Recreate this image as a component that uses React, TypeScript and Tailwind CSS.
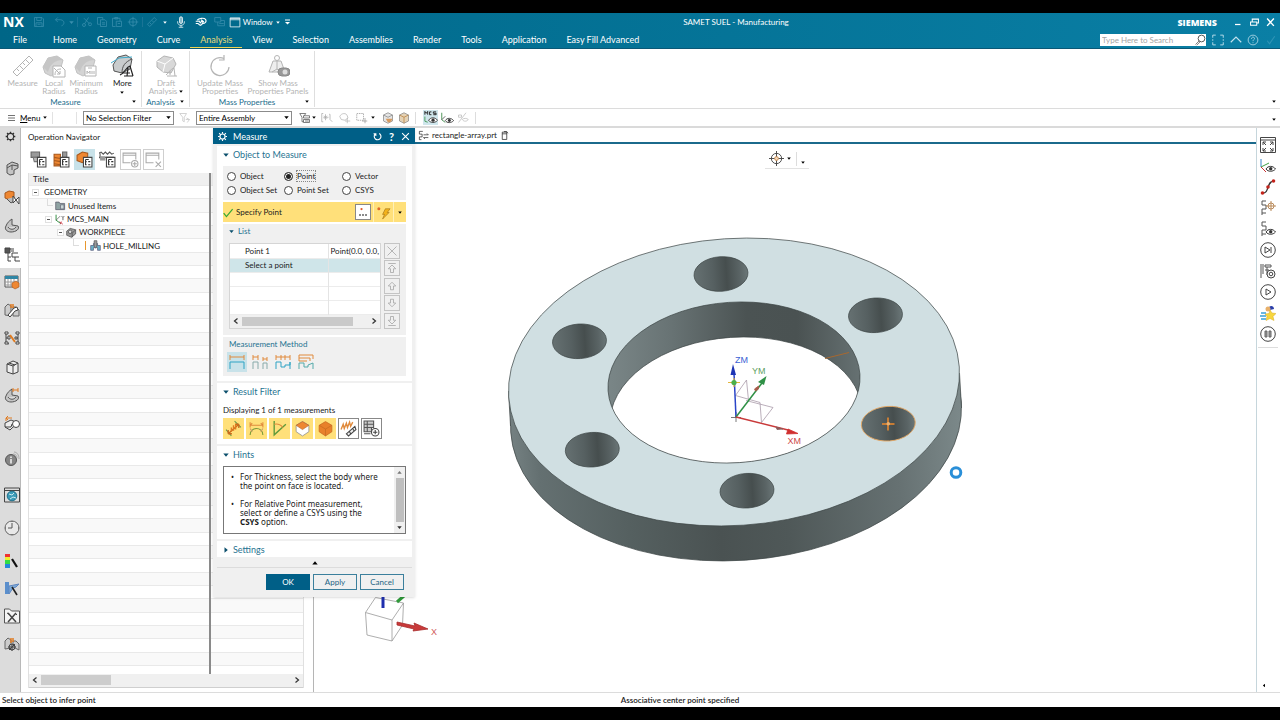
import type { ReactNode } from 'react';
import { clsx } from 'clsx';

interface IconProps {
  children: ReactNode;
  className?: string;
  box?: string;
}

function Icon({ children, className = 'w-4 h-4', box = '0 0 16 16' }: IconProps) {
  return (
    <svg viewBox={box} className={clsx('shrink-0', className)} fill="none" stroke="currentColor" strokeWidth="1" aria-hidden="true">
      {children}
    </svg>
  );
}

function Caret({ className = 'w-[5px] h-[3px] text-black' }: { className?: string }) {
  return (
    <svg viewBox="0 0 10 6" className={clsx('shrink-0', className)} fill="currentColor" aria-hidden="true">
      <path d="M0.5 0.5h9L5 6z" />
    </svg>
  );
}

/* Title bar */

function QuickAccess() {
  return (
    <div className="flex items-center text-[#3a8fae]">
      <button aria-label="Save" className="ml-[9px]">
        <Icon className="w-3 h-3"><path d="M2 2h10l2 2v10H2zM5 2v4h6V2M4 14V9h8v5M6 11h4" /></Icon>
      </button>
      <button aria-label="Undo" className="ml-[9px] flex items-center">
        <Icon className="w-3 h-3"><path d="M5 2L2 5l3 3M2 5h7c6 1 5 7 1 8" /></Icon>
        <Caret className="ml-[3px] w-[5px] h-[3px]" />
      </button>
      <span className="mx-[3px] h-2.5 w-px bg-[#1a7496]" />
      <button aria-label="Cut"><Icon className="w-3 h-3"><path d="M10 2L5 10M4 3l7 7" /><circle cx="4" cy="12" r="2" /><circle cx="12" cy="11" r="2" /></Icon></button>
      <button aria-label="Copy" className="ml-[3px]"><Icon className="w-3 h-3"><path d="M6 11H2V2h7v3M6 5h6l2 2v7H6zM8 9h4M8 11h4" /></Icon></button>
      <button aria-label="Paste" className="ml-[3px]"><Icon className="w-3 h-3"><path d="M6 14H2V3h10v4M5 2h4v2H5zM7 7h7v7H7zM9 10h3" /></Icon></button>
      <button aria-label="Repeat" className="ml-1"><Icon className="w-3 h-3"><circle cx="8" cy="8" r="5" /><path d="M8 1v14M1 8h14" /></Icon></button>
      <span className="mx-[3px] h-2.5 w-px bg-[#1a7496]" />
      <button aria-label="Measure" className="flex items-center">
        <Icon className="w-3 h-3"><path d="M2 11L11 2l3 3-9 9zM5 9l2 2M8 6l2 2" /></Icon>
        <Caret className="ml-[5px] w-[4px] h-[3px] text-white" />
      </button>
      <button aria-label="Voice" className="ml-2 text-white">
        <Icon className="w-3 h-3"><rect x="6" y="1" width="4" height="9" rx="2" fill="#ffffff88" /><path d="M3.500 7v1c0 6 9 6 9 0V7M8 12.500V15M5 15h6" /></Icon>
      </button>
      <button aria-label="Touch" className="ml-2 text-white">
        <Icon className="w-3 h-3"><path d="M3 5.500C5 3 12 2 14 4.500c2 3-1 6-4 5.500M1 7h4M1 10h3l3 2.500 2-1 2-4-2-.5-2 2-2-3M8 5l4 3" strokeWidth="1.500" /></Icon>
      </button>
      <button aria-label="Switch" className="ml-[7px]"><Icon className="w-3 h-3"><path d="M1 2h8v6H1zM5 8v5h9V6H9M7 10h6" /></Icon></button>
      <button className="ml-[3px] flex items-center text-[8px] text-white">
        <Icon className="mr-[2px] w-3 h-3"><path d="M1.500 2.500h13v12h-13zM1.500 5h13M1.500 3.500h13" /></Icon>
        Window
        <Caret className="ml-[3px] w-[4px] h-[3px]" />
      </button>
      <button aria-label="Customize" className="ml-[5px] text-white">
        <Icon className="w-[5px] h-[6px]" box="0 0 10 12"><path d="M0 2h10" strokeWidth="2" /><path d="M0 6h10l-5 5z" fill="currentColor" stroke="none" /></Icon>
      </button>
    </div>
  );
}

function TitleBar() {
  return (
    <div className="grid h-[18px] grid-cols-[1fr_auto_1fr] items-center">
      <div className="flex items-center pl-[3px]">
        <span className="font-['Open_Sans',sans-serif] text-[14px] leading-none font-bold">NX</span>
        <QuickAccess />
      </div>
      <div className="pl-48 text-[8px] whitespace-nowrap">SAMET SUEL - Manufacturing</div>
      <div className="flex items-center justify-end pr-[5px]">
        <span className="mr-[17px] font-['Open_Sans',sans-serif] text-[9px] font-extrabold">SIEMENS</span>
        <button aria-label="Minimize" className="mr-2"><Icon className="w-2 h-2"><path d="M2 13h11" strokeWidth="2.500" /></Icon></button>
        <button aria-label="Restore" className="mr-[7px]"><Icon className="w-[9px] h-[9px]"><path d="M4 6V2h11v7h-3M1 7h11v6H1z" strokeWidth="1.800" /></Icon></button>
        <button aria-label="Close"><Icon className="w-[9px] h-[9px]"><path d="M2 1l12 13M14 1L2 14" strokeWidth="2.500" /></Icon></button>
      </div>
    </div>
  );
}

const TABS = ['Home', 'Geometry', 'Curve', 'Analysis', 'View', 'Selection', 'Assemblies', 'Render', 'Tools', 'Application', 'Easy Fill Advanced'];

function TabBar() {
  return (
    <div className="flex h-[18px] items-stretch border-b border-[#0a5876] text-[9px]">
      <button className="mr-[5px] pr-[11px] pl-[13px]">File</button>
      {TABS.map(tab => (
        <button
          key={tab}
          className={clsx('border-y px-[10px] whitespace-nowrap', tab === 'Analysis' ? 'border-t-transparent border-b-[#f0d552] text-[#e8dc7a]' : 'border-transparent')}
        >
          {tab}
        </button>
      ))}
      <div className="ml-auto flex items-center gap-1.5 pr-[3px] text-[#c3e2ee]">
        <label className="flex h-3 w-[106px] items-center bg-white text-[#555]">
          <input aria-label="Search" placeholder="Type Here to Search" className="min-w-0 flex-1 pl-0.5 text-[8px] outline-none placeholder:text-[#a5a5a5]" />
          <Icon className="w-3 h-3"><circle cx="10" cy="6" r="4.500" strokeWidth="1.300" /><path d="M7 9l-5 5M8.500 10l-5 5" /></Icon>
        </label>
        <button aria-label="Full screen"><Icon className="w-3 h-3"><path d="M1 5V1.500h4M11 1.500h4V5M15 11v3.500h-4M5 14.500H1V11M1 7v2M15 7v2" strokeWidth="1.200" /></Icon></button>
        <button aria-label="Minimize ribbon"><Icon className="w-3 h-3"><path d="M1 11l7-7 7 7" strokeWidth="1.500" /></Icon></button>
        <button aria-label="Help" className="-ml-px"><Icon className="w-3 h-3"><circle cx="8" cy="8" r="6.500" /><path d="M6 6.500c0-3 4-3 4-.5 0 1.500-2 1.500-2 3.500M8 11v1.200" /></Icon></button>
        <button aria-label="Done" className="text-[#2f93b5]"><Icon className="w-3 h-3"><path d="M3 9l3 4 7-10" strokeWidth="1.500" /></Icon></button>
      </div>
    </div>
  );
}

/* Ribbon */

const solidShape = <><path d="M1 13L6 4l9-2 6 4-3 11-9 5-6-3z" fill="#d4d4d4" stroke="#c2c2c2" /><path d="M1 13L6 4l9-2 6 4c-8 0-13 4-15 12z" fill="#c6c6c6" stroke="none" /></>;

function RibbonButton({ label, icon, width, active, caret }: { label: string[]; icon: ReactNode; width: string; active?: boolean; caret?: boolean }) {
  return (
    <button className={clsx('flex flex-col items-center pt-[3px] text-[8px] leading-[8px]', width, active ? 'text-[#222]' : 'text-[#b4b4b4]')}>
      <Icon className="mb-px w-6 h-6" box="0 0 24 24">{icon}</Icon>
      {label.map((line, i) => (
        <span key={line} className="flex items-center whitespace-nowrap">
          {line}
          {caret && i === label.length - 1 && <Caret className="ml-0.5 w-[4px] h-[3px] text-black" />}
        </span>
      ))}
      {active && <Caret className="mt-1 w-[4px] h-[3px] text-black" />}
    </button>
  );
}

function RibbonGroup({ title, children, width, inset }: { title: string; children: ReactNode; width: string; inset: string }) {
  return (
    <section className={clsx('relative mt-0.5 mb-px flex shrink-0 flex-col border-r border-[#dedede]', width)}>
      <div className={clsx('flex flex-1 items-start', inset)}>{children}</div>
      <div className="pr-[10px] text-center text-[8px] leading-[10px] text-[#236d8c]">{title}</div>
      <Caret className="absolute right-[5px] bottom-1 w-[4px] h-[3px] text-black" />
    </section>
  );
}

function Ribbon() {
  return (
    <div className="flex h-[60px] items-stretch border-b border-[#dcdcdc] bg-white">
      <RibbonGroup title="Measure" width="w-[142px]" inset="pl-[6px]">
        <RibbonButton width="w-[34px]" label={['Measure']} icon={<path d="M2 18L18 2l4 4L6 22zM6 15l2 2M9 12l3 3M12 9l2 2M15 6l3 3" />} />
        <RibbonButton width="w-[30px]" label={['Local', 'Radius']} icon={<>{solidShape}<path d="M11 12h8l4 4v7H11z" fill="#fff" /><path d="M13 21c0-4 2-6 6-6M12 14l6 6M18 17v3h-3" /></>} />
        <RibbonButton width="w-[36px]" label={['Minimum', 'Radius']} icon={<>{solidShape}<path d="M11 12h11v10H11z" fill="#fff" /><path d="M13 20v-3l1.500 2 1.500-2v3M18 17v3M20 20v-3M14 14h4" /></>} />
        <RibbonButton width="w-[38px]" active label={['More']} icon={<><path d="M3 11L8 3l8-2 6 4-2 10-8 4-8-2z" fill="#c9cccd" stroke="#555" /><path d="M12 19c0-7 3-11 10-14" stroke="#555" /><path d="M1 9l8-5 13-1" stroke="#3fa9c9" /><path d="M10 21c5-2 6-8 10-9l3 10M12 19h8M14 22h9M18 14l-1 8" stroke="#222" strokeWidth="1.200" /></>} />
      </RibbonGroup>
      <RibbonGroup title="Analysis" width="w-12" inset="pl-[5px]">
        <RibbonButton width="w-[38px]" caret label={['Draft', 'Analysis']} icon={<><path d="M3 7l7-5 9 2 3 6-5 9-8-1-6-5z" fill="#d8d8d8" /><path d="M3 7l8 3 8-6M11 10l-2 8" stroke="#fff" /><path d="M12 21c3-2 4-6 8-7l1 8M13 22h10M16 17v4" /></>} />
      </RibbonGroup>
      <RibbonGroup title="Mass Properties" width="w-[125px]" inset="pl-1">
        <RibbonButton width="w-[52px]" label={['Update Mass', 'Properties']} icon={<path d="M16 4.500A9 9 0 1 0 21 13M16 1v5h-5" strokeWidth="1.200" />} />
        <RibbonButton width="w-[64px]" label={['Show Mass', 'Properties Panels']} icon={<><path d="M7 7h8l4 11H3z" fill="#eee" /><circle cx="11" cy="4" r="2.500" /><path d="M11 7v8l-5 3M11 15l4 3" /><rect x="12" y="14" width="12" height="8" rx="4" fill="#999" stroke="#888" /><circle cx="19" cy="18" r="2.500" fill="#ddd" stroke="none" /></>} />
      </RibbonGroup>
      <Caret className="mt-auto mr-1 mb-[5px] ml-auto w-[4px] h-[3px] text-black" />
    </div>
  );
}

function FilterSelect({ label, value, width }: { label: string; value: string; width: string }) {
  return (
    <div className={clsx('relative h-[14px]', width)}>
      <select aria-label={label} className="block h-full w-full appearance-none border border-[#8b8b8b] bg-white pl-0.5 text-[8px] leading-none text-black">
        <option>{value}</option>
      </select>
      <Caret className="pointer-events-none absolute top-[5px] right-[3px] w-[5px] h-[3px] text-black" />
    </div>
  );
}

const eye = <><path d="M6 11c2-3.500 7-3.500 9.500 0-2.500 3-7.500 3-9.500 0z" fill="#fff" stroke="#333" /><circle cx="10.700" cy="10.800" r="1.700" fill="#333" stroke="none" /></>;

function SelectionBar() {
  return (
    <div className="flex h-[19px] items-center border-b-2 border-[#dadada] bg-white text-[8px] text-[#777]">
      <button className="flex w-[52px] items-center pl-2 text-black">
        <Icon className="mr-1 w-2 h-2 text-[#444]"><path d="M0 3h14M0 8h14M0 13h14" strokeWidth="1.500" /></Icon>
        <span><u>M</u>enu</span>
        <Caret className="ml-[3px] w-[4px] h-[3px]" />
      </button>
      <span className="mr-[6px] h-3 w-[25px] border-x border-[#e2e2e2]" />
      <FilterSelect label="Type filter" value="No Selection Filter" width="w-[91px]" />
      <Icon className="mx-[5px] w-3 h-3 text-[#c4c4c4]"><path d="M1 2h9L7 7v6l-2-1V7zM10 8l4 2-3 4M14 10H9" /></Icon>
      <FilterSelect label="Selection scope" value="Entire Assembly" width="w-[96px]" />
      <div className="flex items-center pl-[7px]">
        <Icon className="w-3 h-3 text-[#555]"><path d="M1 2h8M1 2l3 5v6h2M9 2L7 5M6 5h8v3H6zM6 10h8v4H6zM8 12h5" /></Icon>
        <Caret className="ml-px w-[4px] h-[3px] text-black" />
        <Icon className="ml-[5px] w-3 h-3 text-[#aaa]"><path d="M3 2H1v11h2M6 3v8M3 7h7M4 5l4 4M8 5L4 9M11 3h1v7l3 3" /></Icon>
        <Icon className="ml-1.5 w-3 h-3 text-[#b5b5b5]"><path d="M1 6c2-5 9-5 10-1l1 3-4 3-5-1zM11 8v7M8 12h7" /></Icon>
        <Icon className="ml-[5px] w-3 h-3 text-[#999]"><path d="M1 2h9v9H1z" strokeDasharray="2 1" /><path d="M12 8v7M8 12h7" /></Icon>
        <Caret className="ml-[3px] w-[4px] h-[3px] text-black" />
        <Icon className="ml-[7px] w-3 h-3 text-[#888]"><path d="M2 4l6-3 6 3v8l-6 3-6-3z" fill="#e4e4e4" /><path d="M2 4l6 3 6-3" /><path d="M5 9h9l-2 4-4 1z" fill="#d69a5f" stroke="none" /></Icon>
        <Icon className="ml-1 w-3 h-3 text-[#888]"><path d="M2 4l6-3 6 3v8l-6 3-6-3z" fill="#e4d2b5" /><path d="M2 4l6 3 6-3M8 7v8" stroke="#b9803f" /></Icon>
        <span className="mx-[5px] h-3 w-px bg-[#ddd]" />
        <button aria-label="Show MCS" className="ml-[2px] h-[15px] w-[15px] bg-[#cfe6ec]">
          <Icon className="w-[15px] h-[15px]"><path d="M2 5V1.500l1.500 2 1.500-2V5M9 2H7v3h2M14 2h-3v1.500h3V5h-3" stroke="#222" /><path d="M2 7v5l3 1" stroke="#4a9a5a" />{eye}</Icon>
        </button>
        <Icon className="ml-[2px] w-[14px] h-[14px]"><path d="M2 2v8l4 3" stroke="#3b8a48" /><path d="M2 10l4-4" stroke="#555" />{eye}</Icon>
        <Icon className="ml-[3px] w-3 h-3 text-[#bbb]"><path d="M2 14L12 1M2 4h4v3H2zM7 10c2-2 6-2 8 0-2 3-6 3-8 0z" /></Icon>
        <span className="ml-[6px] h-3 w-px bg-[#ddd]" />
      </div>
      <Caret className="mt-1 mr-1 ml-auto w-[4px] h-[3px] text-black" />
    </div>
  );
}

/* Left resource bar */

const greyBlock = <path d="M3 5l5-3 6 2v4l-4 2v4l-4 1-3-2z" fill="#c4c4c4" stroke="#555" />;
const disc = <path d="M8 2v6l6 1c2 3-2 6-7 6-4 0-7-3-5-6 1-3 3-5 6-7zM4 10c2 3 6 3 8 0" fill="#c4c4c4" stroke="#555" />;
const tools = <><path d="M1 13V5l3-3 3 2v10zM9 14V5h3l3 3v6z" fill="#ccc" stroke="#666" /><path d="M7 2v4M9 2v4" stroke="#e07b20" strokeWidth="1.500" /><path d="M4 13l6-7 3-1 1 3-3 1-5 6z" fill="#fff" stroke="#444" /></>;

const RESOURCES: { name: string; size: string; icon: ReactNode }[] = [
  { name: 'Assembly Navigator', size: 'h-7', icon: <>{greyBlock}<path d="M3 8l5-3 6 1M8 5v5" stroke="#555" /></> },
  { name: 'Constraint Navigator', size: 'h-[29px]', icon: <><path d="M1 4l4-2 5 1v6l-4 2-5-2z" fill="#ee8732" stroke="#a8581c" /><path d="M3 10l4 4 3-2V8" fill="#bbb" stroke="#555" /><path d="M9 7v7l6-6v7z" fill="#fff" stroke="#444" /></> },
  { name: 'Part Navigator', size: 'h-7', icon: disc },
  { name: 'Operation Navigator', size: 'h-[29px]', icon: <><path d="M1 2h5v5H1z" fill="#555" stroke="#444" /><path d="M6 3h4M7 5h3M4 7v8h3M4 11h3M10 7h-2v4h3v4h5M10 7h4M11 11h4" stroke="#444" /></> },
  { name: 'Machine Tool Navigator', size: 'h-7', icon: <><path d="M1 2h13v11H1z" fill="#fff" stroke="#555" /><path d="M1 2h13v3H1z" fill="#2f86a5" stroke="none" /><path d="M1 8h13M1 11h13M4 5v8M7 5v8M10 5v8" stroke="#999" /><path d="M8 9l4-2 3 2v4l-4 2-3-2z" fill="#ee8732" stroke="#a8581c" strokeWidth=".6" /></> },
  { name: 'Reuse Library', size: 'h-7', icon: tools },
  { name: 'Web Links', size: 'h-7', icon: <><path d="M2 3v10l3 1M2 8h3M14 3v11M11 8h3" stroke="#444" /><path d="M1 2h3v2H1zM4 6h2v3H4zM1 12h3v2H1zM12 2h3v2h-3zM11 7h2v2h-2zM12 12h3v2h-3z" fill="#fff" stroke="#444" /><path d="M6 5l5 7" stroke="#e07b20" strokeWidth="2" /></> },
  { name: 'Books', size: 'h-[29px]', icon: <path d="M3 5l6-3 5 2v9l-5 2-6-2zM3 5l6 2 5-3M9 7v8M5 4l6 2" fill="#eee" stroke="#444" /> },
  { name: 'Measure Parts', size: 'h-7', icon: <>{disc}<path d="M9 3h5M9 1v4M14 1v4" stroke="#e07b20" /></> },
  { name: 'Inspect', size: 'h-7', icon: <><path d="M1 8l6-3 7 3-6 5-2 2-5-3z" fill="#eee" stroke="#444" /><path d="M1 12l6 0 1-3" stroke="#444" /><path d="M2 6V3h6M2 3l2-2M2 3l2 2" stroke="#e07b20" /><circle cx="12" cy="9" r="3.500" fill="#fff" stroke="#444" /></> },
  { name: 'Information', size: 'h-11', icon: <><circle cx="7" cy="9" r="5.500" fill="#858585" stroke="#555" /><path d="M7 5.500v1.500M7 8v4.500" stroke="#eee" strokeWidth="1.600" /><path d="M10 1c3 0 5 3 5 7M9 3c3 0 4 2 4 4" stroke="#aaa" /></> },
  { name: 'Browser', size: 'h-7', icon: <><path d="M.5 1h15v14H.5z" fill="#ddd" stroke="#444" /><path d="M.5 3.500h15" stroke="#444" /><circle cx="8" cy="9" r="4.800" fill="#3b9bb8" stroke="#1f6f8a" /><path d="M5 7l3 1 2-2M6 12l3-2 3 1" stroke="#c9e8ef" /></> },
  { name: 'History', size: 'h-[38px]', icon: <><circle cx="8" cy="8" r="7" fill="#e8e8e8" stroke="#666" /><path d="M8 3v5H4M8 1v1M8 14v1M1 8h1M14 8h1" stroke="#555" /></> },
  { name: 'Colors', size: 'h-[27px]', icon: <><path d="M1 1h5v3H1z" fill="#e33" stroke="none" /><path d="M1 4h5v3H1z" fill="#ee3" stroke="none" /><path d="M1 7h5v4H1z" fill="#3d4" stroke="none" /><path d="M1 11h5v4H1z" fill="#28d" stroke="none" /><path d="M8 6l5 8" stroke="#111" strokeWidth="2.200" /></> },
  { name: 'Display', size: 'h-7', icon: <><path d="M1 2h4v12H1z" fill="#5b8fcc" stroke="none" /><path d="M5 6l10-2-3 3-3 1-4 6z" fill="#7facd8" stroke="#5f86c0" /><path d="M8 7l5 8" stroke="#222" strokeWidth="1.600" /></> },
  { name: 'Process Studio', size: 'h-7', icon: <><path d="M.5 3V1h5l2 2h8v12H.5z" fill="#f4f4f4" stroke="#555" /><path d="M4 5l8 9M12 5l-8 9" stroke="#444" strokeWidth="1.500" /><path d="M3 5l2 1M11 5l2 2" stroke="#444" /></> },
  { name: 'Wizards', size: 'h-7', icon: <><path d="M1 13V5l3-3 3 2v8zM9 11V5h3l3 3v6z" fill="#ccc" stroke="#666" /><path d="M7 2v5M9 2v4" stroke="#e07b20" strokeWidth="1.500" /><circle cx="8" cy="11" r="3" fill="#bbb" stroke="#444" /><path d="M8 8v7M4 11h8M5 14l6-6" stroke="#444" /></> },
];

function ResourceBar() {
  return (
    <nav className="flex w-[21px] shrink-0 flex-col items-stretch border-r border-[#b9b9b9] bg-[#dcdcdc]">
      <button aria-label="Resource bar options" className="flex h-[26px] items-start justify-center pt-[3px]">
        <Icon className="w-[11px] h-[11px] text-[#333]"><circle cx="8" cy="8" r="4.500" strokeWidth="1.600" /><path d="M8 1v2M8 13v2M1 8h2M13 8h2M3 3l1.500 1.500M11.500 11.500L13 13M13 3l-1.500 1.500M4.500 11.500L3 13" strokeWidth="2" /></Icon>
      </button>
      {RESOURCES.map(res => (
        <button
          key={res.name}
          aria-label={res.name}
          className={clsx('flex items-center justify-center pl-[3px]', res.size, res.name === 'Operation Navigator' && '-mr-px bg-white')}
        >
          <Icon className="w-4 h-4">{res.icon}</Icon>
        </button>
      ))}
    </nav>
  );
}

/* Operation navigator */

const treeMark = <><path d="M7 6h8v9H7z" fill="#fff" stroke="#444" /><path d="M9 8v5h1M9 10h1M11.500 10h2M11.500 13h2M9 8h3" stroke="#333" /></>;

const NAV_TOOLS: { name: string; style: string; icon: ReactNode }[] = [
  { name: 'Program order view', style: '', icon: <><path d="M1 1h8v5H1z" fill="#9a9a9a" stroke="#666" /><path d="M3 6h5v4H4z" fill="#bbb" stroke="#777" />{treeMark}</> },
  { name: 'Machine tool view', style: '', icon: <><path d="M1 3h6v11H1z" fill="#ee8732" stroke="#a8581c" /><path d="M1 6l6 1M1 9l6 1M1 12l6 1" stroke="#a8581c" /><path d="M9 1h4v5H9z" fill="#999" stroke="#666" />{treeMark}</> },
  { name: 'Geometry view', style: 'bg-[#c8e2e9]', icon: <><path d="M1 4l5-3 5 1v5l-5 4-5-2z" fill="#ee8732" stroke="#a8581c" />{treeMark}</> },
  { name: 'Machining method view', style: '', icon: <><path d="M0 2l2-1 2 2 2-2 2 2 2-2 2 2 2-1M1 2v5M4 6h4M0 6h14" stroke="#555" /><path d="M1 5h5v4H1z" fill="#999" stroke="none" />{treeMark}</> },
  { name: 'Create', style: 'border border-[#cfcfcf]', icon: <><path d="M8 11H1V2h12v6M1 4h12" stroke="#aaa" /><circle cx="12" cy="12" r="3" stroke="#aaa" /><path d="M10 12h4M12 10v4" stroke="#aaa" /></> },
  { name: 'Delete', style: 'border border-[#cfcfcf]', icon: <><path d="M8 11H1V2h12v6M1 4h12M10 10l5 5M15 10l-5 5" stroke="#aaa" /></> },
];

const expander = <span className="flex h-[7px] w-[7px] items-center justify-center border border-[#e0e0e0] bg-white"><span className="h-px w-[3px] bg-[#555]" /></span>;
const branch = <span className="mb-[6px] h-[7px] w-[6px] border-b border-l border-[#ddd]" />;

const TREE: { name: string; indent: string; lead: ReactNode; icon?: ReactNode }[] = [
  { name: 'GEOMETRY', indent: 'pl-[3px] gap-[5px]', lead: expander },
  { name: 'Unused Items', indent: 'pl-[18px] gap-[2px]', lead: branch, icon: <><path d="M1 3h5l1 2h7v9H1z" fill="#8fa3a3" stroke="#556" /><path d="M8 7h5v6H8z" fill="#c9d6d6" stroke="#667" /></> },
  { name: 'MCS_MAIN', indent: 'pl-[16px] gap-[2px]', lead: expander, icon: <><path d="M3 1v8l7 5" stroke="#2f8d3e" strokeWidth="1.400" /><path d="M3 9l6-6" stroke="#555" /><path d="M8 11l5 4M11 11l-2 4" stroke="#c23" /><path d="M11 3l2 2 2-2M13 5v4" stroke="#333" /></> },
  { name: 'WORKPIECE', indent: 'pl-[28px] gap-[2px]', lead: expander, icon: <><path d="M1 6l5-4 8 2v6l-6 5-7-3z" fill="#999" stroke="#444" /><circle cx="6" cy="7" r="2.500" fill="#ddd" stroke="#444" /><path d="M9 15V9l5-5" stroke="#444" /></> },
];

function OperationNavigator() {
  return (
    <aside className="flex w-[293px] shrink-0 flex-col border-r border-[#b5b5b5] bg-white pt-1 pr-[9px] pb-1 pl-[7px] text-[8px] text-[#1a1a1a]">
      <h2 className="leading-[10px]">Operation Navigator</h2>
      <div className="mt-[7px] mb-[3px] flex items-center gap-[2px]">
        {NAV_TOOLS.map(tool => (
          <button key={tool.name} aria-label={tool.name} className={clsx('flex h-[21px] w-[21px] items-center justify-center', tool.style)}>
            <Icon className="w-[17px] h-[17px]">{tool.icon}</Icon>
          </button>
        ))}
      </div>
      <div className="flex min-h-0 flex-1 flex-col border-x border-[#e0e0e0]">
        <div className="flex min-h-0 flex-1">
          <div className="w-[182px] shrink-0 overflow-hidden border-r-2 border-[#8a8a8a]">
            <div className="h-3 bg-[#f0f0f0] pl-1 leading-3">Title</div>
            {Array.from({ length: 37 }, (_, i) => (
              <div key={i} className="flex h-[13px] items-center border-t border-[#e9e9e9] whitespace-nowrap nth-[3n]:h-[14px] odd:bg-[#f9f9f9]">
                {i < TREE.length && (
                  <div className={clsx('flex items-center', TREE[i].indent)}>
                    {TREE[i].lead}
                    {TREE[i].icon && <Icon className="w-[11px] h-[11px]">{TREE[i].icon}</Icon>}
                    {TREE[i].name}
                  </div>
                )}
                {i === TREE.length && (
                  <div className="flex items-center gap-[2px] pl-[44px]">
                    {branch}
                    <span className="ml-1 h-[9px] w-px bg-[#e8972e]" />
                    <Icon className="ml-[2px] w-[11px] h-[11px]"><path d="M1 8h4V5h6v3h4v7h-4v-4H5v4H1z" fill="#69b3c9" stroke="#557" /><path d="M6 1h4v8l-2 3-2-3z" fill="#999" stroke="#555" /></Icon>
                    HOLE_MILLING
                  </div>
                )}
              </div>
            ))}
          </div>
          <div className="flex-1 overflow-hidden">
            <div className="h-3 bg-[#f0f0f0]" />
            {Array.from({ length: 37 }, (_, i) => (
              <div key={i} className="h-[13px] border-t border-[#e9e9e9] nth-[3n]:h-[14px] odd:bg-[#f9f9f9]" />
            ))}
          </div>
        </div>
        <div className="flex h-3 items-center justify-between bg-[#f0f0f0] px-[2px]">
          <Icon className="mr-[2px] w-2 h-2 text-[#333]"><path d="M11 3L5 8l6 5" strokeWidth="2.500" /></Icon>
          <span className="mr-auto h-[10px] w-[70px] bg-[#cdcdcd]" />
          <Icon className="w-2 h-2 text-[#333]"><path d="M5 3l6 5-6 5" strokeWidth="2.500" /></Icon>
        </div>
        <div className="h-[2px] border-b border-[#cfcfcf] bg-[#f0f0f0]" />
      </div>
    </aside>
  );
}

/* Measure dialog */

function Section({ title, open = true, children }: { title: string; open?: boolean; children?: ReactNode }) {
  return (
    <section className={clsx('mb-[2px] bg-white px-[6px]', open ? 'pb-[5px]' : 'pb-px')}>
      <h3 className="flex items-center gap-[4px] pt-[3px] text-[9px] leading-3 text-[#1f7391]">
        <Caret className={clsx('w-[6px] h-[4px] text-[#0b4f6c]', !open && '-rotate-90')} />
        {title}
      </h3>
      {children}
    </section>
  );
}

const KINDS = ['Object', 'Point', 'Vector', 'Object Set', 'Point Set', 'CSYS'];

const LIST_TOOLS: { name: string; d: string }[] = [
  { name: 'Remove', d: 'M2 2l12 12M14 2L2 14' },
  { name: 'Move to top', d: 'M3 2h10M8 4L3 9h3v5h4V9h3z' },
  { name: 'Move up', d: 'M8 3L3 8h3v5h4V8h3z' },
  { name: 'Move down', d: 'M8 13L3 8h3V3h4v5h3z' },
  { name: 'Move to bottom', d: 'M3 14h10M8 12L3 7h3V2h4v5h3z' },
];

const METHODS: { name: string; icon: ReactNode }[] = [
  { name: 'Free', icon: <><path d="M1 1v5M15 1v5M1 3h14" stroke="#e08a3c" /><path d="M1 15V8h14v7" stroke="#2fa3c4" /></> },
  { name: 'Object pair', icon: <><path d="M1 1v5M6 1v5M1 3h5M11 3v4M15 3v4M11 5h4" stroke="#e08a3c" /><path d="M1 15V8h5v7M11 15V9h4v6" stroke="#8aa" /></> },
  { name: 'Chain', icon: <><path d="M1 1v5M6 1v5M10 1v5M15 1v5M1 3h14" stroke="#e08a3c" /><path d="M1 15V8h5v5h4v-2h5v-3M15 8v7" stroke="#2fa3c4" /></> },
  { name: 'Reference', icon: <><path d="M1 7V1h14M1 4h11M1 7h8M15 1v4M12 4v3" stroke="#e08a3c" /><path d="M1 15V9h5v4h4v-2l5-2v6" stroke="#5aa" /></> },
];

const cube = 'M2 5l6-3.500L14 5v6l-6 4-6-4z';
const RESULTS: { name: string; style: string; icon: ReactNode }[] = [
  { name: 'Distance', style: 'bg-[#ffe07a]', icon: <><path d="M1 9l5 6M9 1l6 6" stroke="#6a9a4a" /><path d="M3 13l10-9M3 13V9.500M3 13h3.500M13 4v3.500M13 4H9.500" stroke="#c96a1c" strokeWidth="1.300" /><path d="M6 7v4M8 5v5M10 4v5" stroke="#e07b20" strokeWidth="1.300" /></> },
  { name: 'Arc length', style: 'bg-[#ffe07a]', icon: <><path d="M2 5h12M2 2v5M14 2v5M2 5l2-2M14 5l-2-2" stroke="#e08a3c" /><path d="M2 14C2 6 14 6 14 14" stroke="#7a9a3a" /><path d="M2 8l2 3M14 8l-2 3" stroke="#c96" /></> },
  { name: 'Angle', style: 'bg-[#ffe07a]', icon: <><path d="M3 1v13L14 4" stroke="#5f9a3c" strokeWidth="1.300" /><path d="M3 4c4-1 7 1 8 3" stroke="#e08a3c" /></> },
  { name: 'Area', style: 'bg-[#ffe07a]', icon: <><path d={cube} fill="#fff" stroke="#888" strokeWidth=".7" /><path d="M2 5l6-3.500L14 5 8 9z" fill="#ee8732" stroke="#b5652a" strokeWidth=".6" /></> },
  { name: 'Volume', style: 'bg-[#ffe07a]', icon: <><path d={cube} fill="#e8802a" stroke="#c86a20" strokeWidth=".7" /><path d="M2 5l6 3.500L14 5M8 8.500V15" stroke="#c86a20" strokeWidth=".7" /></> },
  { name: 'Annotation', style: 'border border-[#888]', icon: <><path d="M1 9l2-5 1 4 2-5 1 4 2-5 1 4 2-4" stroke="#e08a3c" strokeWidth="1.300" /><path d="M6 13l8-7 1 3-7 6zM9 11l1 2M12 8l1 2" fill="#eee" stroke="#444" /></> },
  { name: 'Add to list', style: 'border border-[#888]', icon: <><path d="M1 1h9v3H1zM1 4h9v3H1zM1 7h7v4H1zM4 1v10M1 13h6" fill="#ccc" stroke="#555" /><circle cx="11.500" cy="11.500" r="3.500" fill="#fff" stroke="#444" /><path d="M9.500 11.500h4M11.500 9.500v4" stroke="#444" /></> },
];

function MeasureList() {
  return (
    <div className="flex gap-[3px]">
      <div className="min-w-0 flex-1 border border-[#d5d5d5] bg-white">
        <table className="w-full table-fixed border-collapse text-[8px] leading-3">
          <colgroup>
            <col />
            <col className="w-[52px]" />
          </colgroup>
          <tbody>
            {[['Point 1', 'Point(0.0, 0.0,'], ['Select a point', ''], ['', ''], ['', ''], ['', '']].map((row, i) => (
              <tr key={i} className={clsx('h-[14px] border-b border-[#ececec]', i === 1 && 'bg-[#cfe5e9]')}>
                <td className="border-r border-[#e4e4e4] p-0 pl-[15px] whitespace-nowrap">{row[0]}</td>
                <td className="p-0 pl-[2px] whitespace-nowrap">{row[1]}</td>
              </tr>
            ))}
          </tbody>
        </table>
        <div className="flex h-[13px] items-center bg-[#f0f0f0] px-[2px]">
          <Icon className="w-2 h-2 text-[#333]"><path d="M11 3L5 8l6 5" strokeWidth="2.500" /></Icon>
          <span className="ml-[2px] h-[9px] w-[111px] bg-[#c9c9c9]" />
          <Icon className="ml-auto w-2 h-2 text-[#333]"><path d="M5 3l6 5-6 5" strokeWidth="2.500" /></Icon>
        </div>
      </div>
      <div className="flex flex-col justify-between">
        {LIST_TOOLS.map(tool => (
          <button key={tool.name} aria-label={tool.name} className="flex h-4 w-4 items-center justify-center border border-[#c4c4c4] text-[#a2a2a2]">
            <Icon className="w-3 h-3"><path d={tool.d} /></Icon>
          </button>
        ))}
      </div>
    </div>
  );
}

function MeasureDialog() {
  return (
    <div role="dialog" aria-label="Measure" className="absolute top-0 left-[213px] w-[202px] bg-[#f0f0f0] text-[8px] text-[#1a1a1a] shadow-sm">
      <div className="flex h-4 items-center bg-[#005f87] pr-[5px] pl-[5px] text-[9px] text-white">
        <Icon className="mr-[6px] w-[9px] h-[9px]"><circle cx="8" cy="8" r="4.500" strokeWidth="2" /><path d="M8 0v3M8 13v3M0 8h3M13 8h3M2 2l2.500 2.500M11.500 11.500L14 14M14 2l-2.500 2.500M4.500 11.500L2 14" strokeWidth="2" /></Icon>
        Measure
        <button aria-label="Reset" className="ml-auto"><Icon className="w-[9px] h-[9px]"><path d="M11 2.500a6 6 0 1 1-7 1M1 3h4v4" strokeWidth="2" /></Icon></button>
        <button aria-label="Help" className="w-[19px] text-[11px] leading-none font-bold">?</button>
        <button aria-label="Close"><Icon className="w-[9px] h-[9px]"><path d="M2 2l12 12M14 2L2 14" strokeWidth="2" /></Icon></button>
      </div>
      <div className="pt-[2px] pr-[3px] pb-px pl-1">
        <Section title="Object to Measure">
          <fieldset className="mt-[5px] grid grid-cols-[57px_58px_1fr] bg-[#f0f0f0] px-[4px] py-[3px]">
            {KINDS.map(kind => (
              <label key={kind} className="flex h-[14px] items-center gap-1 whitespace-nowrap">
                <input
                  type="radio"
                  name="kind"
                  defaultChecked={kind === 'Point'}
                  className="h-[9px] w-[9px] appearance-none rounded-full border border-[#444] bg-white checked:bg-[#222] checked:shadow-[inset_0_0_0_1px_white]"
                />
                <span className={clsx(kind === 'Point' && 'outline outline-1 outline-dotted outline-[#888]', 'leading-[10px]')}>{kind}</span>
              </label>
            ))}
          </fieldset>
          <div className="mt-[2px] flex h-5 items-center bg-[#ffe07a]">
            <Icon className="w-[11px] h-[11px] text-[#35a935]"><path d="M1 9l4 5L14 3" strokeWidth="1.800" /></Icon>
            <span className="ml-[2px]">Specify Point</span>
            <button aria-label="Point dialog" className="ml-auto flex h-4 w-4 items-center justify-center border border-[#888] bg-white">
              <Icon className="w-3 h-3"><circle cx="6" cy="4" r="1.500" fill="#e05a2a" stroke="none" /><path d="M3 12h2M7 12h2M11 12h2" stroke="#333" strokeWidth="2" /></Icon>
            </button>
            <button aria-label="Inferred point" className="ml-[2px] flex h-full w-[21px] items-center justify-center border-x border-[#fff0b8]">
              <Icon className="w-[15px] h-[15px]"><circle cx="3" cy="4" r="1.600" fill="#e0662a" stroke="none" /><path d="M10 4h5l-3 4h2l-7 7 2-5H7z" fill="#f2b21c" stroke="#9a6a10" strokeWidth=".6" /></Icon>
            </button>
            <Caret className="mr-[4px] ml-[4px] w-[4px] h-[3px] text-black" />
          </div>
          <div className="mt-[2px] bg-[#f0f0f0] px-[6px] pt-[2px] pb-[6px]">
            <h4 className="mb-[6px] flex items-center gap-[4px] leading-[11px] text-[#1f7391]">
              <Caret className="w-[5px] h-[3px] text-[#0b4f6c]" />
              List
            </h4>
            <MeasureList />
          </div>
          <div className="mt-[2px] bg-[#f0f0f0] px-[4px] pt-[2px] pb-[4px]">
            <h4 className="mb-[2px] pl-[2px] leading-[11px] text-[#1f7391]">Measurement Method</h4>
            <div className="flex gap-[3px]">
              {METHODS.map((method, i) => (
                <button key={method.name} aria-label={method.name} className={clsx('flex h-5 w-5 items-center justify-center', i === 0 && 'bg-[#c8e2e9]')}>
                  <Icon className="w-4 h-4">{method.icon}</Icon>
                </button>
              ))}
            </div>
          </div>
        </Section>
        <Section title="Result Filter">
          <p className="mt-[6px] leading-3">Displaying 1 of 1 measurements</p>
          <div className="mt-[2px] flex gap-[2px]">
            {RESULTS.map(result => (
              <button key={result.name} aria-label={result.name} className={clsx('flex h-[21px] w-[21px] items-center justify-center', result.style)}>
                <Icon className="w-[17px] h-[17px]">{result.icon}</Icon>
              </button>
            ))}
          </div>
        </Section>
        <Section title="Hints">
          <div className="mt-[5px] flex h-[68px] border border-[#777] font-['Noto_Sans',sans-serif] text-[8px] leading-[9px]">
            <ul className="flex flex-1 flex-col gap-[9px] pt-[5px] pl-[16px] whitespace-nowrap">
              <li className="relative before:absolute before:-left-[9px] before:content-['•']">For Thickness, select the body where<br />the point on face is located.</li>
              <li className="relative before:absolute before:-left-[9px] before:content-['•']">For Relative Point measurement,<br />select or define a CSYS using the<br /><b>CSYS</b> option.</li>
            </ul>
            <div className="flex w-[11px] flex-col items-center bg-[#f0f0f0] py-1">
              <Caret className="w-[5px] h-[3px] rotate-180 text-[#777]" />
              <span className="my-1 w-2 flex-1 bg-[#bfbfbf]" />
              <Caret className="w-[5px] h-[3px] text-[#333]" />
            </div>
          </div>
        </Section>
        <Section title="Settings" open={false} />
        <div className="flex h-[9px] items-center justify-center border-b border-[#dcdcdc]">
          <Caret className="w-[6px] h-[4px] rotate-180 text-black" />
        </div>
        <div className="flex justify-end gap-[3px] pt-[6px] pr-[8px] pb-[6px] text-[#1f6584]">
          <button className="h-4 w-11 bg-[#005f87] text-white">OK</button>
          <button className="h-4 w-11 border border-[#3b7f9c]">Apply</button>
          <button className="h-4 w-11 border border-[#3b7f9c]">Cancel</button>
        </div>
      </div>
    </div>
  );
}

/* Graphics window */

const HOLES: [number, number][] = [[721, 274], [875.5, 315.3], [579.5, 341.3], [592.3, 449.7], [747, 490.7]];

function Model() {
  return (
    <svg viewBox="314 144 942 548" className="h-full w-full" role="img" aria-label="Flange with six holes">
      <defs>
        <linearGradient id="rim" gradientUnits="userSpaceOnUse" x1="509" x2="962" y1="0" y2="0">
          <stop offset="0" stopColor="#758182" />
          <stop offset=".06" stopColor="#647071" />
          <stop offset=".25" stopColor="#556060" />
          <stop offset=".45" stopColor="#4a5252" />
          <stop offset=".6" stopColor="#4f5858" />
          <stop offset=".85" stopColor="#667172" />
          <stop offset="1" stopColor="#7c898a" />
        </linearGradient>
        <linearGradient id="bore" gradientUnits="userSpaceOnUse" x1="608" x2="860" y1="0" y2="0">
          <stop offset="0" stopColor="#7a8687" />
          <stop offset=".25" stopColor="#687374" />
          <stop offset=".55" stopColor="#4b5353" />
          <stop offset=".75" stopColor="#4a5252" />
          <stop offset="1" stopColor="#667172" />
        </linearGradient>
        <linearGradient id="hole" x1="0" x2="1" y1="0" y2="0">
          <stop offset="0" stopColor="#667172" />
          <stop offset=".35" stopColor="#566061" />
          <stop offset=".6" stopColor="#464e4e" />
          <stop offset=".85" stopColor="#5a6465" />
          <stop offset="1" stopColor="#6b7778" />
        </linearGradient>
        <clipPath id="boreClip">
          <ellipse cx="734" cy="382.500" rx="126.200" ry="80.300" transform="rotate(-3.800 734 382.500)" />
        </clipPath>
      </defs>

      {/* View cube in the lower left corner */}
      <g fill="none" stroke="#999" strokeWidth=".8">
        <path d="M365.500 612.500l10-15 28 5.500-11.500 17zM365.500 612.500l1.500 22.500 25 6v-21M392 641l10.500-16 1-22" />
        <path d="M383 608v-14" stroke="#1f2fae" strokeWidth="3" />
        <path d="M397 602l8-7" stroke="#2f9a3a" strokeWidth="3" />
        <path d="M397 622l18 4-1-3 14 6-15 2 1-2-17-4z" fill="#c93a3a" stroke="#a82c2c" />
      </g>
      <text x="431" y="635" fontSize="9" fill="#d05a5a" fontFamily="Liberation Sans, sans-serif">X</text>

      {/* Ring */}
      <g stroke="#3c4444" strokeWidth=".7">
        <ellipse cx="736" cy="417" rx="225.800" ry="143.500" transform="rotate(-3.800 736 417)" fill="url(#rim)" />
        <path d="M508.500 391l2 35 451-18-2-35z" fill="url(#rim)" stroke="none" />
        <path d="M508.500 391l2 35M959.500 373l2 35" />
        <ellipse cx="734" cy="382" rx="225.800" ry="143.500" transform="rotate(-3.800 734 382)" fill="#d0dfe2" />
        <g clipPath="url(#boreClip)">
          <rect x="600" y="300" width="270" height="170" fill="url(#bore)" />
          <ellipse cx="736" cy="417.500" rx="126.200" ry="80.300" transform="rotate(-3.800 736 417.500)" fill="#fff" />
        </g>
        <ellipse cx="734" cy="382.500" rx="126.200" ry="80.300" transform="rotate(-3.800 734 382.500)" fill="none" />
        {HOLES.map(([cx, cy]) => (
          <ellipse key={cx} cx={cx} cy={cy} rx="27" ry="17.300" transform={`rotate(-3.800 ${cx} ${cy})`} fill="url(#hole)" />
        ))}
        <ellipse cx="888.300" cy="423.700" rx="27" ry="17.300" transform="rotate(-3.800 888.300 423.700)" fill="url(#hole)" stroke="#e5a862" strokeWidth=".9" />
      </g>
      <path d="M882 424h12.500M888 417.500v13" stroke="#f08a2c" strokeWidth="1.500" />
      <circle cx="888.300" cy="423.700" r="1.800" fill="#e9b070" />
      <path d="M825 358.500l24-6" stroke="#a8682f" strokeWidth="1" />

      {/* Machine coordinate system */}
      <g fill="none" strokeWidth=".8">
        <path d="M735.500 395.500l11-15.500 2 20.500M735.500 395.500l24.500 7 1.500 20M746 400.500l27 7-11.500 15" stroke="#a99aa9" />
        <path d="M731 417.500h10M736 412v10" stroke="#555" />
        <path d="M736 417l-2-44" stroke="#2a45c8" strokeWidth="1.500" />
        <path d="M733 364l3 11h-5.500z" fill="#1e35b5" />
        <path d="M736 417l26-34" stroke="#2f9146" strokeWidth="1.500" />
        <path d="M766.500 376l-2.500 9-6-3z" fill="#2f9146" />
        <path d="M758.500 386l-4 3 1 2 3-2z" fill="#a85a4a" stroke="#a85a4a" />
        <path d="M736 417l52 13" stroke="#c93a3a" strokeWidth="1.300" />
        <path d="M798 433.500l-11.500.500 1.500-5z" fill="#d02f2f" stroke="#d02f2f" />
        <path d="M776 427l7 2-6 .5z" fill="#8a5a5a" stroke="#8a5a5a" />
        <path d="M728 382.500h12M734 378v9" stroke="#e3b63c" strokeWidth="1.200" />
        <circle cx="734" cy="382.500" r="2.600" fill="#4ab04a" />
      </g>
      <g fontSize="9" fontFamily="Liberation Sans, sans-serif">
        <text x="735" y="363" fill="#3a62d4">ZM</text>
        <text x="752" y="374" fill="#5f9f62">YM</text>
        <text x="787.500" y="443.500" fill="#cc4a4a">XM</text>
      </g>

      {/* Busy cursor */}
      <circle cx="956" cy="472.500" r="4.800" fill="#fff" stroke="#2a8fd8" strokeWidth="3" />
    </svg>
  );
}

function GraphicsWindow() {
  return (
    <main className="flex min-w-0 flex-1 flex-col bg-white">
      <div className="flex h-4 shrink-0 items-center border-b-2 border-[#1b6a8c] pl-[104px] text-[8px] text-[#222]">
        <Icon className="mr-[3px] w-[11px] h-[11px]"><path d="M7 2H2v4h4v4H2v4h3" /><path d="M8 7h7l-2-2M15 11H8l2 2" /></Icon>
        rectangle-array.prt
        <Icon className="ml-[3px] w-[9px] h-[9px]"><path d="M4 2h8v13H4zM4 5h8M7 1h5l2 3" strokeWidth="1.300" /></Icon>
      </div>
      <div className="relative min-h-0 flex-1">
        <Model />
        <div className="absolute top-[5px] left-1/2 flex h-5 -translate-x-5 items-center border-b border-[#e2e2e2] px-1">
          <Icon className="w-[15px] h-[15px] text-[#444]"><circle cx="8" cy="8" r="5.500" /><path d="M8 0v16M0 8h16" /><circle cx="8" cy="8" r="2" fill="#f3d9bd" stroke="#c98a4f" /></Icon>
          <Caret className="ml-[3px] w-[4px] h-[3px] text-black" />
          <span className="ml-[5px] h-[14px] w-px bg-[#ddd]" />
          <Caret className="mt-2 ml-[4px] w-[4px] h-[3px] text-black" />
        </div>
      </div>
    </main>
  );
}

const toolPath = <path d="M6 1H2v4h4v4H2v4h4M2 13v2" stroke="#555" />;

const VIEW_TOOLS: { name: string; icon: ReactNode }[] = [
  { name: 'Fit', icon: <><path d="M.5.500h15v15H.5zM.5 3h15" stroke="#444" /><path d="M3 8V5h3M10 5h3v3M13 11v3h-3M6 14H3v-3M3 5l3 3M13 5l-3 3M13 14l-3-3M3 14l3-3" stroke="#444" /></> },
  { name: 'Show WCS', icon: <><path d="M1 1v8" stroke="#3a86c8" /><path d="M1 9l8-4" stroke="#3fa046" /><path d="M1 9l5 5" stroke="#c33" />{eye}</> },
  { name: 'Curve', icon: <><path d="M2 14c8 1 4-12 12-12" stroke="#333" strokeWidth="1.200" /><circle cx="2.500" cy="14" r="1.800" fill="#c4241c" stroke="none" /><circle cx="8" cy="8" r="1.800" fill="#c4241c" stroke="none" /><circle cx="13.500" cy="2" r="1.800" fill="#c4241c" stroke="none" /></> },
  { name: 'Tool path start', icon: <>{toolPath}<circle cx="11" cy="6" r="3" stroke="#b98a5a" /><path d="M11 1v10M6 6h10" stroke="#b98a5a" /></> },
  { name: 'Show tool path', icon: <>{toolPath}{eye}</> },
  { name: 'Step forward', icon: <><circle cx="8" cy="8" r="7.300" stroke="#444" /><path d="M5 5l5 3-5 3zM11 5v6" stroke="#444" /></> },
  { name: 'Machine settings', icon: <><path d="M1 1v14M3 1v10M5 2h6v2H5zM5 7h4M7 4v8" stroke="#555" /><circle cx="11" cy="11" r="4" fill="#fff" stroke="#444" /><circle cx="11" cy="11" r="1.800" stroke="#444" /></> },
  { name: 'Play', icon: <><circle cx="8" cy="8" r="7.300" stroke="#444" /><path d="M6 5l5 3-5 3z" stroke="#444" /></> },
  { name: 'Speed', icon: <><path d="M9 2c2-2 5-1 5 2l-4 1z" fill="#2a3faa" stroke="none" /><circle cx="8" cy="4" r="2.500" fill="#e8b06a" stroke="none" /><path d="M10 5l2 3 4 .5-3 3 1 4-4-2-4 2 1-4-2-2.500 4-.5z" fill="#f7d63e" stroke="#d8a820" strokeWidth=".5" /><path d="M1 8h5M0 11h6M1 14h5" stroke="#3aa0d8" strokeWidth="1.300" /></> },
  { name: 'Pause', icon: <><circle cx="8" cy="8" r="7.300" stroke="#444" /><path d="M5 5h2v6H5zM9 5h2v6H9z" fill="#999" stroke="#666" /></> },
];

function ViewToolbar() {
  return (
    <nav className="flex w-6 shrink-0 flex-col items-center gap-[5px] border-l border-[#c6d6dc] bg-white pt-[9px] pr-px">
      {VIEW_TOOLS.map(tool => (
        <button key={tool.name} aria-label={tool.name}>
          <Icon className="w-4 h-4">{tool.icon}</Icon>
        </button>
      ))}
      <span className="w-5 border-t border-[#ddd]" />
      <Caret className="mt-auto mb-[5px] w-[4px] h-[3px] -translate-x-1 rotate-90 text-black" />
    </nav>
  );
}

export default function App() {
  return (
    <div className="flex h-screen flex-col bg-black py-[13px] font-[Lato,'Noto_Sans',sans-serif] leading-none">
      <header className="bg-linear-to-r from-[#006687] to-[#0a7fa5] text-white">
        <TitleBar />
        <TabBar />
      </header>
      <Ribbon />
      <SelectionBar />
      <div className="relative flex min-h-0 flex-1 bg-white">
        <ResourceBar />
        <OperationNavigator />
        <GraphicsWindow />
        <ViewToolbar />
        <MeasureDialog />
      </div>
      <footer className="grid h-[15px] shrink-0 grid-cols-[1fr_auto_1fr] items-center border-t border-[#dcdcdc] bg-white px-0.5 text-[8px] font-semibold text-[#222]">
        <span>Select object to infer point</span>
        <span className="pl-20">Associative center point specified</span>
      </footer>
    </div>
  );
}
